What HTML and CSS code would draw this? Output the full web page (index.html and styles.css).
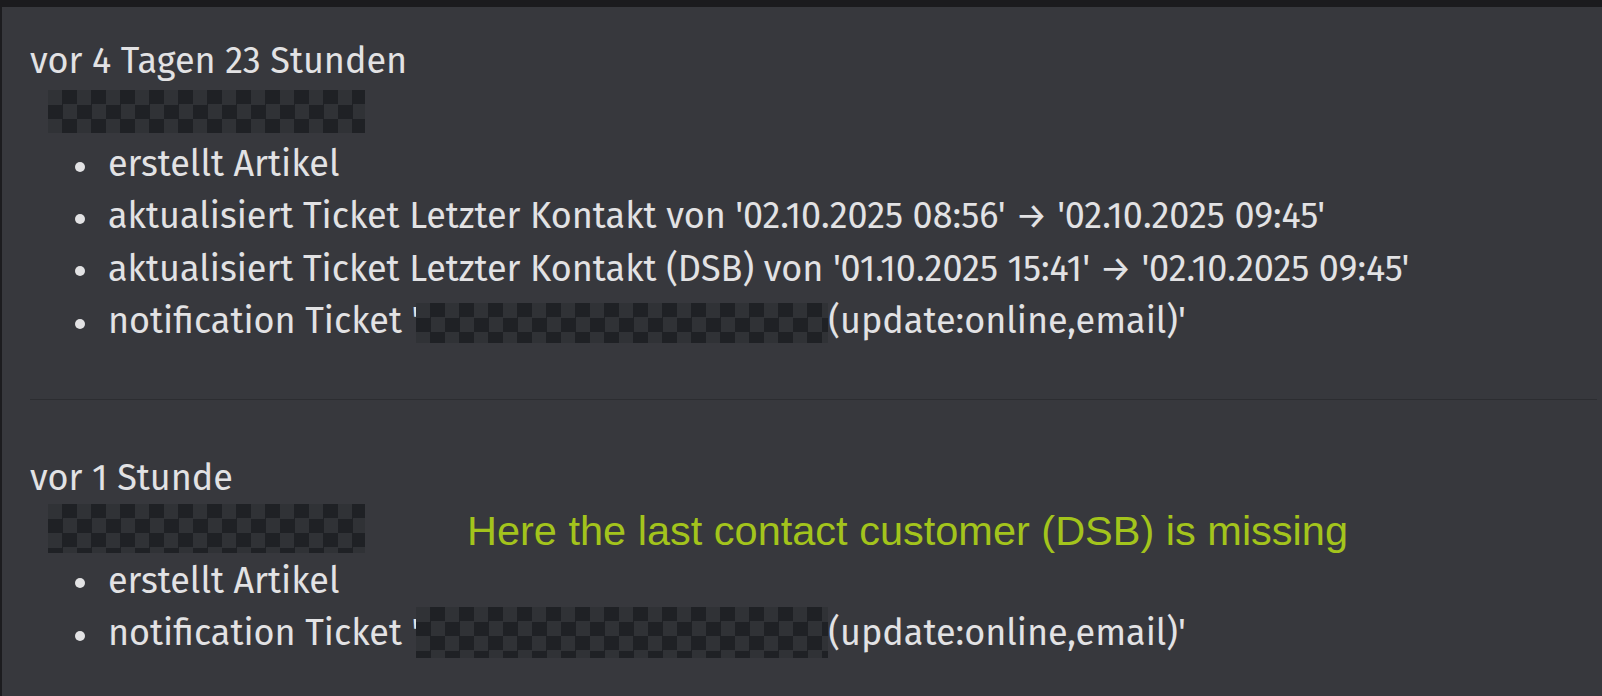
FILE: index.html
```html
<!DOCTYPE html>
<html lang="de">
<head>
<meta charset="utf-8">
<title>Historie</title>
<link rel="stylesheet" href="styles.css">
</head>
<body>
<div class="topbar"></div>
<div class="panel">
  <section class="entry entry-first">
    <div class="when">vor 4 Tagen 23 Stunden</div>
    <div class="redact redact-user"></div>
    <ul class="changes">
      <li>erstellt Artikel</li>
      <li>aktualisiert Ticket Letzter Kontakt von '02.10.2025 08:56' → '02.10.2025 09:45'</li>
      <li>aktualisiert Ticket Letzter Kontakt (DSB) von '01.10.2025 15:41' → '02.10.2025 09:45'</li>
      <li>notification Ticket '<span class="redact redact-inline"></span>(update:online,email)'</li>
    </ul>
  </section>
  <section class="entry entry-second">
    <div class="when">vor 1 Stunde</div>
    <div class="user-row">
      <div class="redact redact-user redact-tall"></div>
      <div class="note">Here the last contact customer (DSB) is missing</div>
    </div>
    <ul class="changes">
      <li>erstellt Artikel</li>
      <li>notification Ticket '<span class="redact redact-inline redact-inline-tall"></span>(update:online,email)'</li>
    </ul>
  </section>
</div>
</body>
</html>
```
FILE: styles.css
```css
html, body {
  margin: 0;
  padding: 0;
  background: #1c1c1f;
  height: 100%;
}
body {
  display: flex;
  flex-direction: column;
  font-family: "Fira Sans", Lato, "Open Sans", sans-serif;
  color: #e2e2e4;
}
.topbar {
  height: 7px;
  flex: none;
  background: #1b1b1e;
}
.panel {
  flex: 1;
  margin-left: 2px;
  background: #37383d;
  padding: 28px 5px 0 28px;
}
.entry {
  font-size: 36px;
  line-height: 52.4px;
}
.entry-first {
  padding-bottom: 51px;
  border-bottom: 1px solid #2c2d31;
}
.entry-second {
  padding-top: 52px;
}
.when {
  height: 52px;
}
.redact {
  background-color: #303236;
  background-image: repeating-conic-gradient(#1f2125 0 25%, transparent 0 50%);
  background-size: 29px 29px;
}
.redact-user {
  width: 317px;
  height: 43px;
  margin: 3px 0 5px 18px;
}
.redact-tall {
  height: 49px;
  margin: 0 0 0 18px;
}
.user-row {
  display: flex;
  align-items: center;
  gap: 102px;
  margin-bottom: 2px;
}
.note {
  font-family: "Liberation Sans", Arial, sans-serif;
  font-size: 41.5px;
  line-height: 40px;
  color: #a3c41c;
  margin-top: 6px;
}
.changes {
  list-style: none;
  margin: 0;
  padding: 0 0 0 45px;
}
.changes li::before {
  content: "";
  display: inline-block;
  width: 10px;
  height: 10px;
  border-radius: 50%;
  background: #e2e2e4;
  vertical-align: middle;
  margin-right: 23px;
}
.redact-inline {
  display: inline-block;
  width: 412px;
  height: 40px;
  vertical-align: -10px;
  margin-left: -3px;
}
.redact-inline-tall {
  height: 51px;
  vertical-align: -13px;
}
```
